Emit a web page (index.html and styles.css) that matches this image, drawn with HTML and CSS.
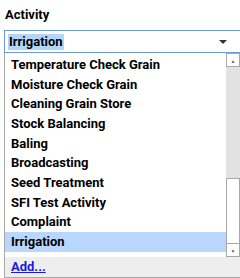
FILE: index.html
```html
<!DOCTYPE html>
<html lang="en">
  <head>
    <meta charset="utf-8">
    <title>Activity</title>
    <link rel="stylesheet" href="styles.css">
  </head>
  <body>
    <div class="field">
      <label class="fieldLabel">Activity</label>
      <div class="picker">
        <span class="pickerValue">Irrigation</span>
        <span class="pickerArrow"></span>
      </div>
      <div class="dropdown">
        <div class="dropBody">
          <ul class="options">
            <li>Temperature Check Grain</li>
            <li>Moisture Check Grain</li>
            <li>Cleaning Grain Store</li>
            <li>Stock Balancing</li>
            <li>Baling</li>
            <li>Broadcasting</li>
            <li>Seed Treatment</li>
            <li>SFI Test Activity</li>
            <li>Complaint</li>
            <li class="selected">Irrigation</li>
          </ul>
          <div class="scrollbar">
            <div class="scrollBtn">&#9650;</div>
            <div class="scrollTrack"></div>
            <div class="scrollThumb"></div>
            <div class="scrollBtn">&#9660;</div>
          </div>
        </div>
        <div class="dropFooter">
          <a href="#" class="addLink">Add...</a>
        </div>
      </div>
    </div>
  </body>
</html>
```

FILE: styles.css
```css
body {
  margin: 0;
  font-family: Roboto, "Liberation Sans", Arial, sans-serif;
  font-size: 13px;
  font-weight: bold;
  color: #000;
  background: #fff;
}

.field {
  padding: 6px 0 0 4px;
}

.fieldLabel {
  display: block;
  height: 24px;
  line-height: 18px;
  padding-left: 1px;
}

.picker {
  display: flex;
  align-items: center;
  height: 21px;
  border: 1px solid #6b9bd2;
  border-right: none;
  padding-left: 3px;
}

.pickerValue {
  background: #b4d5fb;
  line-height: 16px;
  padding: 0 1px;
}

/* small down triangle */
.pickerArrow {
  margin-left: auto;
  margin-right: 13px;
  width: 0;
  height: 0;
  border-left: 4px solid transparent;
  border-right: 4px solid transparent;
  border-top: 4px solid #333;
}

.dropdown {
  border-left: 1px solid #a8a8a8;
  border-bottom: 1px solid #a8a8a8;
}

.dropBody {
  display: flex;
  height: 204px;
}

.options {
  list-style: none;
  margin: 0;
  padding: 2px 0 0 0;
  flex: 1;
}

.options li {
  height: 19.67px;
  line-height: 19.67px;
  padding-left: 6px;
  white-space: nowrap;
}

.options .selected {
  background: #b9d7fc;
}

.scrollbar {
  width: 14px;
  display: flex;
  flex-direction: column;
  background: #e2e2e2;
}

.scrollBtn {
  height: 14px;
  border: 1px solid #a8a8a8;
  background: #fff;
  font-size: 5px;
  color: #666;
  text-align: center;
  line-height: 14px;
  box-sizing: border-box;
}

.scrollTrack {
  height: 111px;
}

.scrollThumb {
  flex: 1;
  border: 1px solid #a8a8a8;
  border-bottom: none;
  background: #fff;
}

.dropFooter {
  background: #eeeeee;
  height: 20px;
  line-height: 20px;
  padding-left: 6px;
}

.addLink {
  color: #1a1ae6;
  text-decoration: underline;
}
```
